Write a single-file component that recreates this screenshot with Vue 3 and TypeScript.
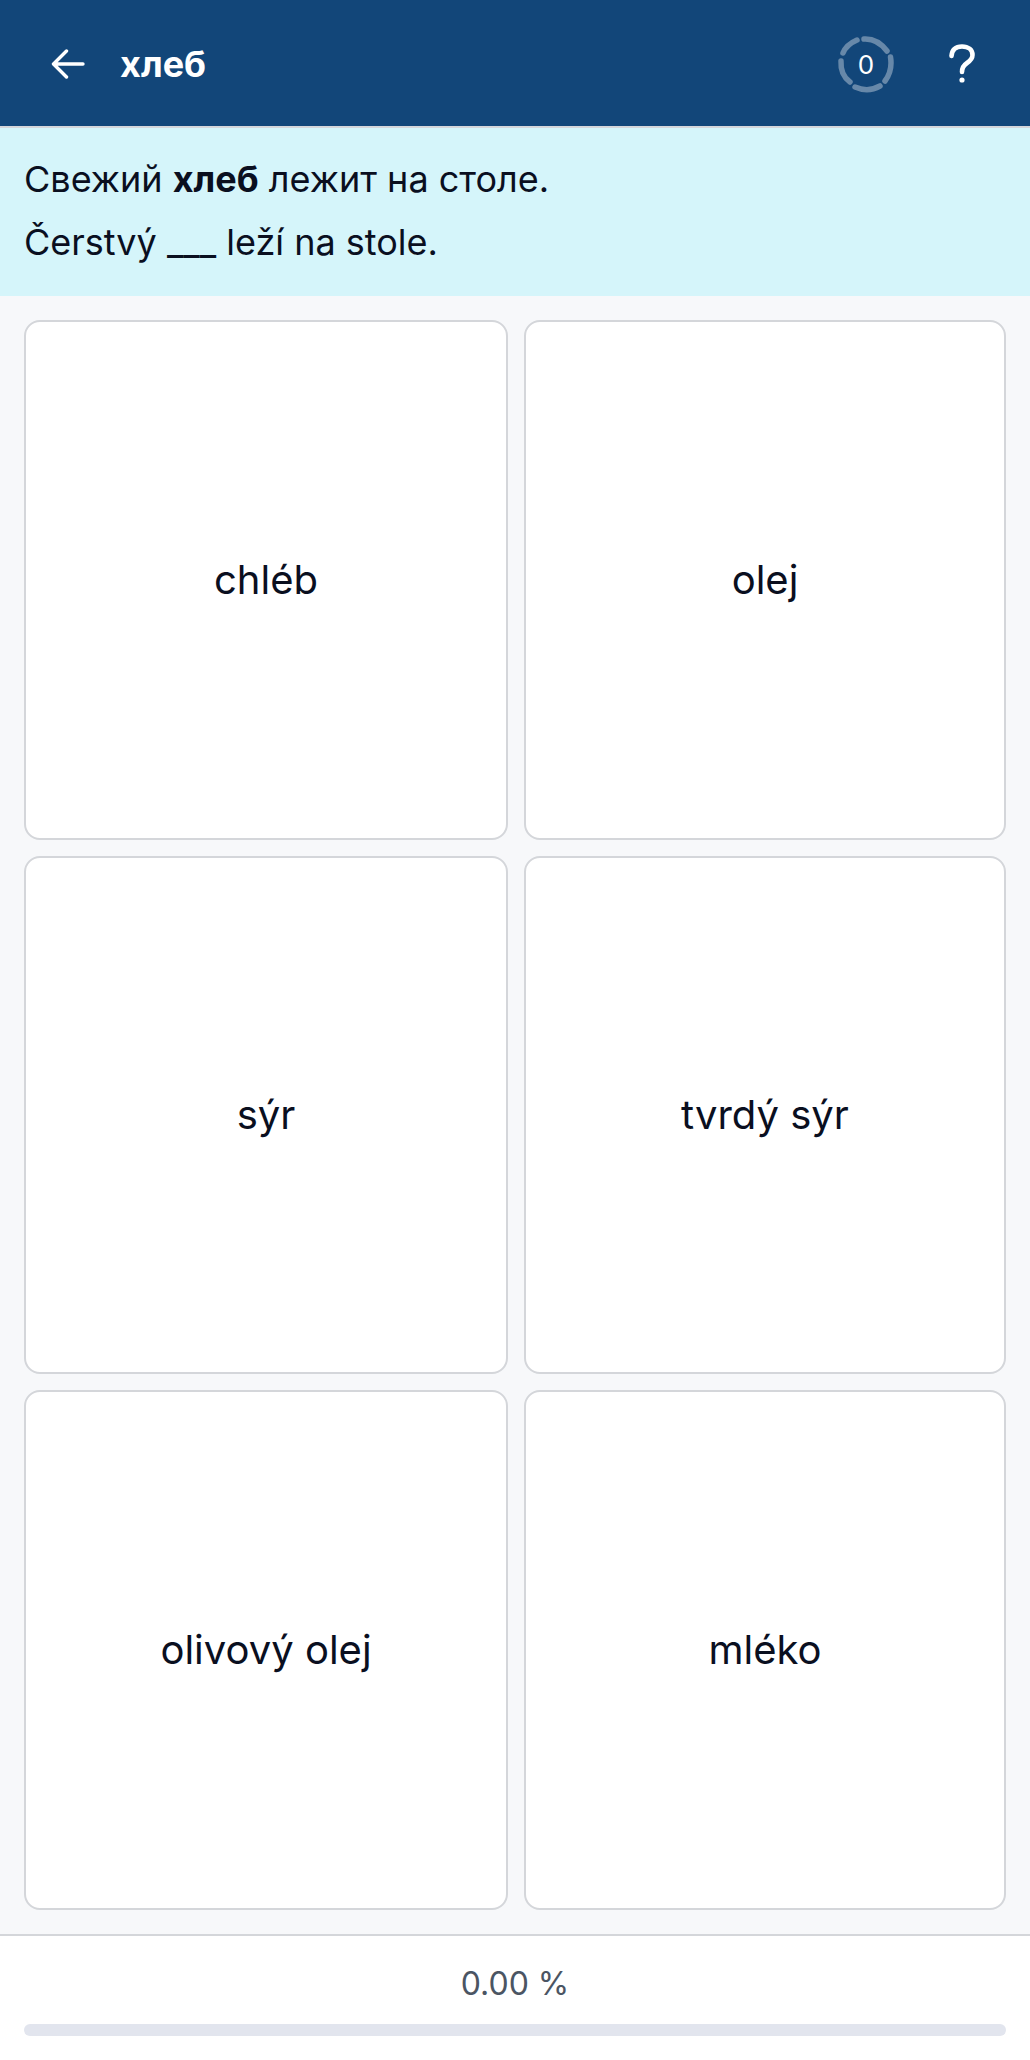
<script setup lang="ts">
const options: string[] = ['chléb', 'olej', 'sýr', 'tvrdý sýr', 'olivový olej', 'mléko'];
const percent = '0.00 %';
</script>

<template>
  <div class="page">
    <header class="topbar">
      <button class="back" aria-label="Back">
        <svg width="34" height="30" viewBox="0 0 34 30" fill="none" stroke="#fff" stroke-width="3.4" stroke-linecap="round" stroke-linejoin="round">
          <path d="M32 15H3M15.5 2 2.5 15l13 13" />
        </svg>
      </button>
      <h1 class="title">хлеб</h1>
      <div class="counter">
        <svg width="58" height="58" viewBox="0 0 58 58" fill="none" stroke="#fff" stroke-opacity="0.36" stroke-width="5.500" stroke-linecap="round">
          <path d="M27 4C36 3.500 44 8 50 16" />
          <path d="M53.500 22C55 31 54 38 48 46" />
          <path d="M43 51C36 55 27 56 18 52" />
          <path d="M13 47C6 42 3.500 35 4 26" />
          <path d="M6 18C8 13 13 8 20 5" />
        </svg>
        <span class="count">0</span>
      </div>
      <button class="help" aria-label="Help">
        <svg width="26" height="40" viewBox="0 0 26 40" fill="none" stroke="#fff" stroke-width="4.600" stroke-linecap="round" stroke-linejoin="round">
          <path d="M2.500 12C3 5.500 7 2.500 13 2.500c6.500 0 10.500 3.500 10.500 8.500 0 4-2.500 6-5.500 8-3 2-5 4-5 9" />
          <circle cx="13" cy="36" r="1.600" fill="#fff" stroke-width="2" />
        </svg>
      </button>
    </header>

    <section class="sentence">
      <p>Свежий <strong>хлеб</strong> лежит на столе.</p>
      <p>Čerstvý ___ leží na stole.</p>
    </section>

    <main class="options">
      <button v-for="option in options" :key="option" class="option">{{ option }}</button>
    </main>

    <footer class="progress">
      <div class="percent">{{ percent }}</div>
      <div class="track"></div>
    </footer>
  </div>
</template>

<style>
html,
body {
  margin: 0;
  padding: 0;
}
</style>

<style scoped>
.page {
  width: 1030px;
  height: 2060px;
  display: flex;
  flex-direction: column;
  background: #f7f8fa;
  font-family: Inter, "Liberation Sans", sans-serif;
  color: #0a0f1f;
}

.topbar {
  height: 128px;
  flex: none;
  box-sizing: border-box;
  display: flex;
  align-items: center;
  padding: 2px 55px 0 51px;
  background: #124679;
  color: #fff;
  border-bottom: 2px solid #d4d6da;
}

.back {
  width: 34px;
  height: 30px;
  padding: 0;
  border: none;
  background: none;
  display: flex;
}

.title {
  margin: 0 0 0 35px;
  font-size: 36px;
  font-weight: 700;
  flex: 1;
}

.counter {
  position: relative;
  width: 58px;
  height: 58px;
  margin-right: 54px;
}

.count {
  position: absolute;
  inset: 0;
  display: flex;
  align-items: center;
  justify-content: center;
  font-size: 26px;
}

.help {
  width: 26px;
  height: 40px;
  padding: 0;
  border: none;
  background: none;
  display: flex;
}

.sentence {
  height: 168px;
  flex: none;
  box-sizing: border-box;
  padding: 20px 24px;
  background: #d5f5fa;
  font-size: 36px;
  line-height: 63px;
}

.sentence p {
  margin: 0;
}

.options {
  flex: 1;
  min-height: 0;
  box-sizing: border-box;
  padding: 24px;
  display: grid;
  grid-template-columns: 484px 1fr;
  grid-template-rows: 520px 518px 1fr;
  gap: 16px;
}

.option {
  background: #fff;
  border: 2px solid #d4d6da;
  border-radius: 16px;
  padding: 0 0 2px;
  font: inherit;
  font-size: 40px;
  color: inherit;
}

.progress {
  height: 126px;
  flex: none;
  box-sizing: border-box;
  padding: 0 24px;
  background: #fff;
  border-top: 2px solid #d4d6da;
}

.percent {
  margin-top: 28px;
  height: 40px;
  line-height: 40px;
  text-align: center;
  font-size: 32px;
  color: #4b5563;
}

.track {
  margin-top: 20px;
  height: 12px;
  border-radius: 6px;
  background: #e2e5ee;
}
</style>
